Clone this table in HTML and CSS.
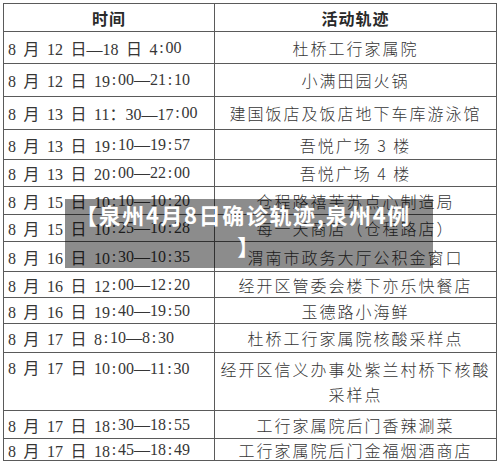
FILE: index.html
```html
<!DOCTYPE html>
<html lang="zh-CN">
<head>
<meta charset="utf-8">
<title>泉州4月8日确诊轨迹</title>
<link rel="stylesheet" href="styles.css">
</head>
<body>
<div class="page">
  <div class="sheet">
    <div class="cell head">时间</div>
    <div class="cell head place">活动轨迹</div>

    <div class="cell time">8 月 12 日—18 日 4<span class="c">:</span>00</div>
    <div class="cell place">杜桥工行家属院</div>

    <div class="cell time">8 月 12 日 19<span class="c">:</span>00—21<span class="c">:</span>10</div>
    <div class="cell place">小满田园火锅</div>

    <div class="cell time">8 月 13 日 11：30—17<span class="c">:</span>00</div>
    <div class="cell place">建国饭店及饭店地下车库游泳馆</div>

    <div class="cell time">8 月 13 日 19<span class="c">:</span>10—19<span class="c">:</span>57</div>
    <div class="cell place">吾悦广场 3 楼</div>

    <div class="cell time">8 月 13 日 20<span class="c">:</span>00—22<span class="c">:</span>00</div>
    <div class="cell place">吾悦广场 4 楼</div>

    <div class="cell time">8 月 15 日 10<span class="c">:</span>10—10<span class="c">:</span>20</div>
    <div class="cell place">仓程路禧芙苏点心制造局</div>

    <div class="cell time">8 月 15 日 10<span class="c">:</span>25—10<span class="c">:</span>28</div>
    <div class="cell place">每一天商店（仓程路店）</div>

    <div class="cell time">8 月 16 日 10<span class="c">:</span>30—10<span class="c">:</span>35</div>
    <div class="cell place">渭南市政务大厅公积金窗口</div>

    <div class="cell time">8 月 16 日 12<span class="c">:</span>00—12<span class="c">:</span>20</div>
    <div class="cell place">经开区管委会楼下亦乐快餐店</div>

    <div class="cell time">8 月 16 日 19<span class="c">:</span>40—19<span class="c">:</span>50</div>
    <div class="cell place">玉德路小海鲜</div>

    <div class="cell time">8 月 17 日 8<span class="c">:</span>10—8<span class="c">:</span>30</div>
    <div class="cell place">杜桥工行家属院核酸采样点</div>

    <div class="cell time top">8 月 17 日 10<span class="c">:</span>00—11<span class="c">:</span>30</div>
    <div class="cell place two">经开区信义办事处紫兰村桥下核酸<br>采样点</div>

    <div class="cell time">8 月 17 日 18<span class="c">:</span>30—18<span class="c">:</span>55</div>
    <div class="cell place">工行家属院后门香辣涮菜</div>

    <div class="cell time">8 月 17 日 18<span class="c">:</span>45—18<span class="c">:</span>49</div>
    <div class="cell place">工行家属院后门金福烟酒商店</div>
  </div>

  <div class="caption"><span class="caption-line">【泉州4月8日确诊轨迹,泉州4例</span><br>】</div>
</div>
</body>
</html>
```

FILE: styles.css
```css
html, body {
  margin: 0;
  padding: 0;
  background: #ffffff;
}

.page {
  position: relative;
  width: 500px;
  height: 469px;
  overflow: hidden;
}

.sheet {
  display: grid;
  grid-template-columns: 211px 282px;
  grid-template-rows: 28px 32px 33px 33px 30px 27px 28px 27px 30px 26px 26px 29px 58px 28px 22px;
  width: 493px;
  margin: 3px 0 0 3px;
  border-top: 1px solid #5a5a5a;
  border-left: 1px solid #5a5a5a;
  font-family: "Liberation Serif", "Noto Sans CJK SC", serif;
  font-size: 16px;
  color: #363636;
}

.cell {
  box-sizing: border-box;
  border-right: 1px solid #5a5a5a;
  border-bottom: 1px solid #5a5a5a;
  display: flex;
  align-items: center;
  overflow: hidden;
  white-space: nowrap;
}

.head {
  justify-content: center;
  font-family: "Noto Sans CJK SC", sans-serif;
  font-weight: 700;
  letter-spacing: 1px;
  color: #2a2a2a;
}

.time {
  padding-left: 4px;
  word-spacing: 3.5px;
}

.time .c {
  padding: 0 1.8px;
}

.time.top {
  align-items: flex-start;
  padding-top: 3px;
  line-height: 25px;
}

.place {
  justify-content: center;
  text-align: center;
  font-family: "Noto Sans CJK SC", sans-serif;
  font-weight: 300;
  letter-spacing: 2px;
}

.place.head {
  font-weight: 700;
  letter-spacing: 1px;
}

.place.two {
  line-height: 25px;
}

.caption {
  position: absolute;
  left: 65px;
  top: 199px;
  width: 368px;
  height: 69px;
  box-sizing: border-box;
  background: rgba(0, 0, 0, 0.45);
  color: #ffffff;
  font-family: "Noto Sans CJK SC", sans-serif;
  font-weight: 700;
  font-size: 22px;
  line-height: 31px;
  letter-spacing: 1.6px;
  text-align: center;
}

.caption-line {
  margin-right: 12px;
}
```
